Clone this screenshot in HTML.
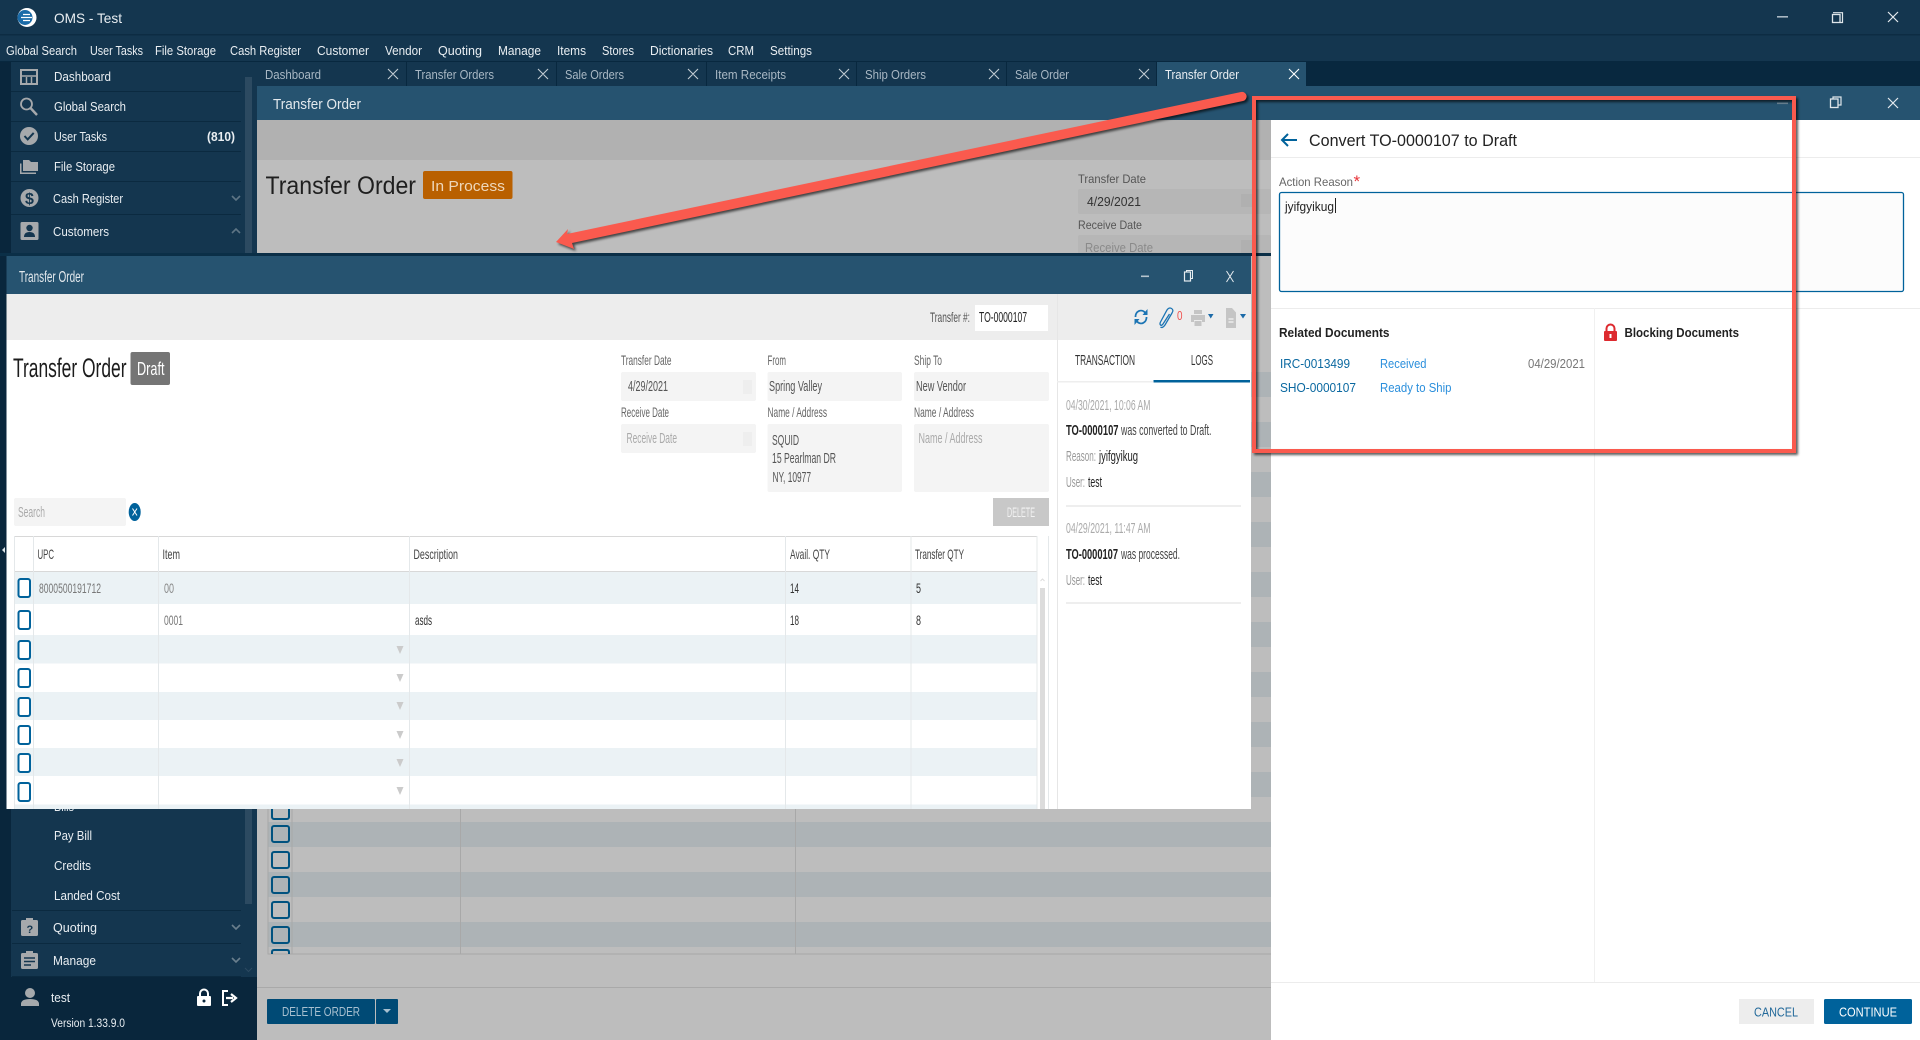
<!DOCTYPE html>
<html lang="en">
<head>
<meta charset="utf-8">
<title>OMS - Test</title>
<style>
html,body{margin:0;padding:0;width:1920px;height:1040px;overflow:hidden;background:#bdbdbd}
svg{display:block}
text{font-family:"Liberation Sans",sans-serif;white-space:pre}
.m{font-size:12.5px;fill:#e9eef2}
.tb{font-size:12.5px;fill:#a9b8c4}
.s{font-size:13px;fill:#e9eef2}
.f{font-size:12px;fill:#666}
.v{font-size:12.5px;fill:#555}
.h{font-size:12px;fill:#444}
.d{font-size:12px;fill:#777}
.l{font-size:12.5px;fill:#aaa}
.b{font-size:12.5px;fill:#222}
.bb{font-size:12.5px;fill:#222;font-weight:bold}
.a{font-size:12.5px}
.mo .d,.mo .h{font-size:14px}
.mo .v,.mo .l,.mo .b,.mo .bb,.mo .a{font-size:14.5px}
</style>
</head>
<body>
<svg xmlns="http://www.w3.org/2000/svg" width="1920" height="1040" viewBox="0 0 1920 1040">
<defs>
<filter id="sh" x="-5%" y="-5%" width="110%" height="110%"><feGaussianBlur stdDeviation="1.2"/></filter>
<filter id="bl" filterUnits="userSpaceOnUse" x="0" y="250" width="1260" height="565"><feGaussianBlur stdDeviation="0.3"/></filter>
</defs>

<!-- app chrome -->
<rect width="1920" height="1040" fill="#bdbdbd"/>
<rect width="1920" height="62" fill="#14364f"/>
<rect y="34" width="1920" height="1.5" fill="#0d2c43"/>
<rect y="61" width="1920" height="25" fill="#08283f"/>

<circle cx="27" cy="17.500" r="9.500" fill="#fff"/>
<circle cx="25" cy="17.500" r="7.500" fill="#1a6ba8"/>
<path d="M23 14.500h7M21 17.500h11M23 20.500h7" stroke="#fff" stroke-width="1.300"/>
<text x="54" y="23" class="m" style="font-size:14px" textLength="68" lengthAdjust="spacingAndGlyphs">OMS - Test</text>

<rect x="1777" y="16" width="11" height="1.6" fill="#aab8c3"/>
<path d="M1833 12.700h9.500v9.800h-2" fill="none" stroke="#dfe6ea" stroke-width="1.2"/><rect x="1832.5" y="14.500" width="7.5" height="8" fill="none" stroke="#dfe6ea" stroke-width="1.3"/>
<path d="M1888 12l10 10M1898 12l-10 10" stroke="#e5eaee" stroke-width="1.2"/>

<!-- menu -->
<text x="6" y="55" class="m" textLength="71" lengthAdjust="spacingAndGlyphs">Global Search</text>
<text x="90" y="55" class="m" textLength="53" lengthAdjust="spacingAndGlyphs">User Tasks</text>
<text x="155" y="55" class="m" textLength="61" lengthAdjust="spacingAndGlyphs">File Storage</text>
<text x="230" y="55" class="m" textLength="71" lengthAdjust="spacingAndGlyphs">Cash Register</text>
<text x="317" y="55" class="m" textLength="52" lengthAdjust="spacingAndGlyphs">Customer</text>
<text x="385" y="55" class="m" textLength="37" lengthAdjust="spacingAndGlyphs">Vendor</text>
<text x="438" y="55" class="m" textLength="44" lengthAdjust="spacingAndGlyphs">Quoting</text>
<text x="498" y="55" class="m" textLength="43" lengthAdjust="spacingAndGlyphs">Manage</text>
<text x="557" y="55" class="m" textLength="29" lengthAdjust="spacingAndGlyphs">Items</text>
<text x="602" y="55" class="m" textLength="32" lengthAdjust="spacingAndGlyphs">Stores</text>
<text x="650" y="55" class="m" textLength="63" lengthAdjust="spacingAndGlyphs">Dictionaries</text>
<text x="728" y="55" class="m" textLength="26" lengthAdjust="spacingAndGlyphs">CRM</text>
<text x="770" y="55" class="m" textLength="42" lengthAdjust="spacingAndGlyphs">Settings</text>

<!-- tabs -->
<rect x="257" y="62" width="149" height="24" fill="#14364f"/>
<rect x="407" y="62" width="149" height="24" fill="#14364f"/>
<rect x="557" y="62" width="149" height="24" fill="#14364f"/>
<rect x="707" y="62" width="149" height="24" fill="#14364f"/>
<rect x="857" y="62" width="149" height="24" fill="#14364f"/>
<rect x="1007" y="62" width="149" height="24" fill="#14364f"/>
<rect x="1157" y="62" width="149" height="24" fill="#265370"/>
<text x="265" y="79" class="tb" textLength="56" lengthAdjust="spacingAndGlyphs">Dashboard</text>
<text x="415" y="79" class="tb" textLength="79" lengthAdjust="spacingAndGlyphs">Transfer Orders</text>
<text x="565" y="79" class="tb" textLength="59" lengthAdjust="spacingAndGlyphs">Sale Orders</text>
<text x="715" y="79" class="tb" textLength="71" lengthAdjust="spacingAndGlyphs">Item Receipts</text>
<text x="865" y="79" class="tb" textLength="61" lengthAdjust="spacingAndGlyphs">Ship Orders</text>
<text x="1015" y="79" class="tb" textLength="54" lengthAdjust="spacingAndGlyphs">Sale Order</text>
<text x="1165" y="79" class="m" textLength="74" lengthAdjust="spacingAndGlyphs">Transfer Order</text>
<g stroke="#c2ccd4" stroke-width="1.1">
<path d="M388 69l10 10M398 69l-10 10M538 69l10 10M548 69l-10 10M688 69l10 10M698 69l-10 10M839 69l10 10M849 69l-10 10M989 69l10 10M999 69l-10 10M1139 69l10 10M1149 69l-10 10"/>
<path d="M1289 69l10 10M1299 69l-10 10" stroke="#fff"/>
</g>

<!-- back page -->
<rect x="257" y="86" width="1663" height="34" fill="#265370"/>
<text x="273" y="109" style="font-size:14.5px;fill:#e3e9ed" textLength="88" lengthAdjust="spacingAndGlyphs">Transfer Order</text>
<rect x="257" y="120" width="1014" height="40" fill="#b1b1b1"/>
<text x="265.500" y="194" style="font-size:25px;fill:#1f1f1f" textLength="150.500" lengthAdjust="spacingAndGlyphs">Transfer Order</text>
<rect x="423" y="171" width="89.5" height="28" rx="2" fill="#b96000"/>
<text x="431" y="191" style="font-size:15px;fill:#eed7bb" textLength="74" lengthAdjust="spacingAndGlyphs">In Process</text>
<text x="1078" y="183" class="f" style="fill:#555" textLength="68" lengthAdjust="spacingAndGlyphs">Transfer Date</text>
<rect x="1078" y="189" width="193" height="25" rx="2" fill="#b6b6b6"/>
<text x="1087" y="206" class="b" style="fill:#333" textLength="54" lengthAdjust="spacingAndGlyphs">4/29/2021</text>
<text x="1078" y="229" class="f" style="fill:#555" textLength="64" lengthAdjust="spacingAndGlyphs">Receive Date</text>
<rect x="1078" y="235" width="193" height="21" rx="2" fill="#b6b6b6"/>
<text x="1085" y="252" class="b" style="fill:#8a8a8a" textLength="68" lengthAdjust="spacingAndGlyphs">Receive Date</text>
<rect x="1241" y="194" width="11" height="13" fill="#b0b0b0"/>
<rect x="1241" y="240" width="11" height="13" fill="#b0b0b0"/>

<!-- back table -->
<g fill="#adb3b6">
<rect x="268" y="372" width="1003" height="25"/><rect x="268" y="422" width="1003" height="25"/><rect x="268" y="472" width="1003" height="25"/><rect x="268" y="522" width="1003" height="25"/><rect x="268" y="572" width="1003" height="25"/><rect x="268" y="622" width="1003" height="25"/><rect x="268" y="672" width="1003" height="25"/><rect x="268" y="722" width="1003" height="25"/><rect x="268" y="772" width="1003" height="25"/><rect x="268" y="822" width="1003" height="25"/><rect x="268" y="872" width="1003" height="25"/><rect x="268" y="922" width="1003" height="25"/>
</g>
<path d="M268 800v154h1003M292 800v154M460.500 800v154M795.500 800v154" fill="none" stroke="#a8a8a8"/>
<g fill="none" stroke="#00527f" stroke-width="2">
<rect x="272" y="803" width="17" height="16" rx="2"/>
<rect x="272" y="826" width="17" height="16" rx="2"/>
<rect x="272" y="852" width="17" height="16" rx="2"/>
<rect x="272" y="877" width="17" height="16" rx="2"/>
<rect x="272" y="902" width="17" height="16" rx="2"/>
<rect x="272" y="927" width="17" height="16" rx="2"/>
</g>
<path d="M272 954v-2q0-2 2-2h13q2 0 2 2v2" fill="none" stroke="#00527f" stroke-width="2"/>
<rect x="257" y="987" width="1014" height="1" fill="#a9a9a9"/>
<rect x="267" y="999" width="108" height="25" rx="1" fill="#004a75"/>
<rect x="376" y="999" width="22" height="25" rx="1" fill="#004a75"/>
<text x="282" y="1016" class="a" style="fill:#a8c0d0" textLength="78" lengthAdjust="spacingAndGlyphs">DELETE ORDER</text>
<path d="M383 1009h8l-4 4z" fill="#a8c0d0"/>

<!-- sidebar -->
<rect y="62" width="257" height="978" fill="#14364f"/>
<rect y="62" width="11" height="978" fill="#0a2a41"/>
<rect x="245" y="77" width="7" height="827" fill="#2c4a61"/>
<g fill="#0b2a40">
<rect x="11" y="91" width="230" height="1"/><rect x="11" y="121" width="230" height="1"/><rect x="11" y="151" width="230" height="1"/><rect x="11" y="181" width="230" height="1"/><rect x="11" y="214" width="230" height="1"/>
<rect x="12" y="910" width="229" height="1"/><rect x="12" y="943" width="229" height="1"/><rect x="12" y="976" width="229" height="1"/>
</g>
<text x="54" y="81" class="s" textLength="57" lengthAdjust="spacingAndGlyphs">Dashboard</text>
<text x="54" y="111" class="s" textLength="72" lengthAdjust="spacingAndGlyphs">Global Search</text>
<text x="54" y="141" class="s" textLength="53" lengthAdjust="spacingAndGlyphs">User Tasks</text>
<text x="207" y="141" class="s" style="font-weight:bold" textLength="28" lengthAdjust="spacingAndGlyphs">(810)</text>
<text x="54" y="171" class="s" textLength="61" lengthAdjust="spacingAndGlyphs">File Storage</text>
<text x="53" y="203" class="s" textLength="70" lengthAdjust="spacingAndGlyphs">Cash Register</text>
<text x="53" y="236" class="s" textLength="56" lengthAdjust="spacingAndGlyphs">Customers</text>
<!-- sidebar icons -->
<g fill="none" stroke="#a6a9ac">
<rect x="21" y="70" width="16" height="14" stroke-width="2"/><path d="M21 76h16M26.500 77v7M31.500 77v7" stroke-width="1.500"/>
<circle cx="26.500" cy="104" r="5.500" stroke-width="1.800"/><path d="M30.500 108l6.500 7" stroke-width="2.400"/>
</g>
<circle cx="29" cy="136" r="9" fill="#a6a9ac"/><path d="M24.500 136l3.200 3.400 6-6.500" fill="none" stroke="#14364f" stroke-width="2"/>
<path d="M20 163.500v10.500h16v-1.500H21.500v-9zM23 160h6l2 2h7v9H23z" fill="#a6a9ac"/>
<circle cx="29.500" cy="198" r="9" fill="#a6a9ac"/><text x="25" y="204" style="font-size:16px;font-weight:bold;fill:#14364f">$</text>
<rect x="20.500" y="222" width="18" height="18" rx="1.500" fill="#a6a9ac"/><circle cx="29.500" cy="228" r="3.200" fill="#14364f"/><path d="M24 237q0-5 5.500-5t5.500 5z" fill="#14364f"/>
<path d="M232 196l4 4 4-4M232 233l4-4 4 4" fill="none" stroke="#5e7585" stroke-width="1.600"/>
<text x="54" y="811" class="s" textLength="20" lengthAdjust="spacingAndGlyphs">Bills</text>
<text x="54" y="840" class="s" textLength="38" lengthAdjust="spacingAndGlyphs">Pay Bill</text>
<text x="54" y="870" class="s" textLength="37" lengthAdjust="spacingAndGlyphs">Credits</text>
<text x="54" y="900" class="s" textLength="66" lengthAdjust="spacingAndGlyphs">Landed Cost</text>
<text x="53" y="932" class="s" textLength="44" lengthAdjust="spacingAndGlyphs">Quoting</text>
<text x="53" y="965" class="s" textLength="43" lengthAdjust="spacingAndGlyphs">Manage</text>
<rect x="21" y="920" width="17" height="16" rx="1.500" fill="#a6a9ac"/><rect x="26" y="918" width="7" height="4" fill="#a6a9ac"/><text x="26.500" y="933" style="font-size:11px;font-weight:bold;fill:#14364f">?</text>
<rect x="21" y="953" width="17" height="16" rx="1.500" fill="#a6a9ac"/><rect x="26" y="951" width="7" height="4" fill="#a6a9ac"/><path d="M24 958h11M24 961.500h11M24 965h7" stroke="#14364f" stroke-width="1.500"/>
<path d="M232 925l4 4 4-4M232 958l4 4 4-4" fill="none" stroke="#6a7f8d" stroke-width="1.600"/>
<path d="M245 968l3.500 3.500 3.500-3.500" fill="none" stroke="#2c4a61"/>
<rect y="977" width="257" height="63" fill="#09263c"/>
<rect width="11" y="62" height="915" fill="#09263c"/>
<circle cx="30" cy="993" r="5" fill="#a6a9ac"/><path d="M21 1006v-2q0-5 9-5t9 5v2z" fill="#a6a9ac"/>
<text x="51" y="1002" class="s" textLength="19" lengthAdjust="spacingAndGlyphs">test</text>
<text x="51" y="1027" style="font-size:11.500px;fill:#e9eef2" textLength="74" lengthAdjust="spacingAndGlyphs">Version 1.33.9.0</text>
<rect x="197" y="996" width="14" height="10" rx="1" fill="#fff"/><path d="M200 996v-2.500a4 4 0 0 1 8 0v2.500" fill="none" stroke="#fff" stroke-width="2"/><circle cx="204" cy="1001" r="1.500" fill="#09263c"/>
<path d="M228 991h-5v14h5" fill="none" stroke="#fff" stroke-width="2"/><path d="M226 998h7M231 994l5 4-5 4" fill="none" stroke="#fff" stroke-width="2.200"/>

<!-- right panel -->
<rect x="1271" y="120" width="649" height="920" fill="#fff"/>
<rect x="1271" y="157" width="649" height="1" fill="#ececec"/>
<path d="M1297 140h-15M1288 134l-6 6 6 6" fill="none" stroke="#00629b" stroke-width="2"/>
<text x="1309" y="146" style="font-size:16.500px;fill:#222" textLength="208" lengthAdjust="spacingAndGlyphs">Convert TO-0000107 to Draft</text>
<text x="1279" y="186" class="f" textLength="74" lengthAdjust="spacingAndGlyphs">Action Reason</text>
<text x="1353.500" y="187" style="font-size:17px;fill:#e8353a">*</text>
<rect x="1279.500" y="192.500" width="624" height="99" rx="2" fill="#fcfcfc" stroke="#00629b" stroke-width="1.300"/>
<text x="1285" y="211" class="b" textLength="49" lengthAdjust="spacingAndGlyphs">jyifgyikug</text>
<rect x="1335" y="198" width="1" height="15" fill="#222"/>
<rect x="1271" y="308" width="649" height="1" fill="#ececec"/>
<rect x="1594" y="308" width="1" height="674" fill="#f0f0f0"/>
<text x="1279" y="337" class="bb" textLength="110.500" lengthAdjust="spacingAndGlyphs">Related Documents</text>
<rect x="1604" y="331" width="13" height="10" rx="1" fill="#dd2a2f"/><path d="M1606.500 331v-2.500a4 4 0 0 1 8 0v2.500" fill="none" stroke="#dd2a2f" stroke-width="2"/><rect x="1609.500" y="334" width="2" height="4" fill="#fff"/>
<text x="1624.500" y="337" class="bb" textLength="114.500" lengthAdjust="spacingAndGlyphs">Blocking Documents</text>
<text x="1280" y="368" class="a" style="fill:#0a68a0" textLength="70" lengthAdjust="spacingAndGlyphs">IRC-0013499</text>
<text x="1380" y="368" class="a" style="fill:#2b8fdc" textLength="46.500" lengthAdjust="spacingAndGlyphs">Received</text>
<text x="1528" y="368" class="a" style="fill:#777" textLength="57" lengthAdjust="spacingAndGlyphs">04/29/2021</text>
<text x="1280" y="392" class="a" style="fill:#0a68a0" textLength="76" lengthAdjust="spacingAndGlyphs">SHO-0000107</text>
<text x="1380" y="392" class="a" style="fill:#2b8fdc" textLength="71.500" lengthAdjust="spacingAndGlyphs">Ready to Ship</text>
<rect x="1271" y="982" width="649" height="1" fill="#ececec"/>
<rect x="1739" y="999" width="75" height="25" fill="#ededed"/>
<text x="1754" y="1016.500" class="a" style="fill:#22699a" textLength="44" lengthAdjust="spacingAndGlyphs">CANCEL</text>
<rect x="1824" y="999" width="88" height="25" rx="1.500" fill="#00629b"/>
<text x="1839" y="1016.500" class="a" style="fill:#fff" textLength="58" lengthAdjust="spacingAndGlyphs">CONTINUE</text>
<rect x="1777" y="102.500" width="11" height="1.600" fill="#6d8798"/>
<rect x="1830.500" y="99" width="7.500" height="8.500" fill="none" stroke="#dfe6ea" stroke-width="1.300"/><path d="M1833 99v-2h8v8h-3" fill="none" stroke="#dfe6ea" stroke-width="1.200"/>
<path d="M1888 98l10 10M1898 98l-10 10" stroke="#e5eaee" stroke-width="1.200"/>

<!-- front modal -->
<rect y="253" width="1271" height="3" fill="#0b2f47"/>
<rect y="256" width="6.500" height="553" fill="#09263c"/>
<path d="M5 547l-3 3 3 3z" fill="#dfe6ea"/>
<g class="mo" filter="url(#bl)">
<rect x="6.500" y="256" width="1244.500" height="553" fill="#fff"/>
<rect x="6.500" y="256" width="1244.500" height="38" fill="#265370"/>
<rect x="6.500" y="294" width="1244.500" height="46" fill="#ededed"/>
<rect x="1057" y="294" width="1" height="515" fill="#e6e6e6"/>
<text x="19" y="282" style="font-size:15.500px;fill:#e3e9ed" textLength="65" lengthAdjust="spacingAndGlyphs">Transfer Order</text>
<rect x="1141" y="275.500" width="8" height="1.600" fill="#b6c4ce"/>
<rect x="1184.500" y="272" width="6" height="9" fill="none" stroke="#e6ecf0" stroke-width="1.200"/><path d="M1186.500 272v-1.500h6v8h-2" fill="none" stroke="#e6ecf0"/>
<path d="M1226.500 271l7 11M1233.500 271l-7 11" stroke="#e6ecf0" stroke-width="1"/>
<text x="930" y="322" class="d" style="fill:#555" textLength="40" lengthAdjust="spacingAndGlyphs">Transfer #:</text>
<rect x="975" y="305" width="73" height="26" fill="#fff"/>
<text x="979" y="322" class="b" textLength="48" lengthAdjust="spacingAndGlyphs">TO-0000107</text>
<!-- toolbar icons -->
<path d="M1135.500 317a5.500 6 0 0 1 9.500-4.500M1146.500 317a5.500 6 0 0 1-9.500 4.500" fill="none" stroke="#1d74b4" stroke-width="1.800"/>
<path d="M1147.500 309v6h-5zM1134.500 325v-6h5z" fill="#1d74b4"/>
<path d="M1169.500 314l-6.500 10q-1.500 2-2.500 1t0-3l6.500-12q2-3 4.500-1.500t.5 4.500l-7 12q-2.500 3.500-4.500 2" fill="none" stroke="#1d74b4" stroke-width="1.300"/>
<text x="1177" y="320" style="font-size:13px;fill:#f0524f" textLength="5.500" lengthAdjust="spacingAndGlyphs">0</text>
<path d="M1191 315h14v7h-3v-2h-8v2h-3zM1194 310h8v4h-8zM1194.500 321h7v5h-7z" fill="#c5c5c5"/>
<path d="M1208 314h5.500l-2.750 4.500zM1240 314h6l-3 4.500z" fill="#1a6ba8"/>
<path d="M1226 308h6l4 4.500v15.500h-10z" fill="#c5c5c5"/><path d="M1228.500 319h5M1228.500 322h5" stroke="#fff"/>

<text x="13" y="377" style="font-size:27px;fill:#1c1c1c" textLength="113.500" lengthAdjust="spacingAndGlyphs">Transfer Order</text>
<rect x="130.500" y="352" width="39.500" height="33" rx="2" fill="#757575"/>
<text x="137" y="375" style="font-size:18px;fill:#fff" textLength="27.500" lengthAdjust="spacingAndGlyphs">Draft</text>

<g fill="#f4f4f4">
<rect x="621" y="372" width="135" height="29" rx="2"/>
<rect x="621" y="424" width="135" height="29" rx="2"/>
<rect x="767.500" y="372" width="134.500" height="29" rx="2"/>
<rect x="767.500" y="424" width="134.500" height="68" rx="2"/>
<rect x="914" y="372" width="135" height="29" rx="2"/>
<rect x="914" y="424" width="135" height="68" rx="2"/>
<rect x="14" y="498" width="112" height="28" rx="2"/>
</g>
<rect x="743" y="380" width="9" height="14" fill="#eeeeee"/>
<rect x="743" y="432" width="9" height="14" fill="#eeeeee"/>
<text x="621" y="365" class="d" style="fill:#666" textLength="50.500" lengthAdjust="spacingAndGlyphs">Transfer Date</text>
<text x="628" y="391" class="v" textLength="40" lengthAdjust="spacingAndGlyphs">4/29/2021</text>
<text x="621" y="417" class="d" style="fill:#666" textLength="48" lengthAdjust="spacingAndGlyphs">Receive Date</text>
<text x="626.500" y="443" class="l" textLength="50.500" lengthAdjust="spacingAndGlyphs">Receive Date</text>
<text x="767.500" y="365" class="d" style="fill:#666" textLength="18.500" lengthAdjust="spacingAndGlyphs">From</text>
<text x="769" y="391" class="v" textLength="53" lengthAdjust="spacingAndGlyphs">Spring Valley</text>
<text x="914" y="365" class="d" style="fill:#666" textLength="28" lengthAdjust="spacingAndGlyphs">Ship To</text>
<text x="916" y="391" class="v" textLength="50" lengthAdjust="spacingAndGlyphs">New Vendor</text>
<text x="767.500" y="417" class="d" style="fill:#666" textLength="59.500" lengthAdjust="spacingAndGlyphs">Name / Address</text>
<text x="914" y="417" class="d" style="fill:#666" textLength="60" lengthAdjust="spacingAndGlyphs">Name / Address</text>
<text x="772" y="445" class="v" textLength="27" lengthAdjust="spacingAndGlyphs">SQUID</text>
<text x="772" y="463" class="v" textLength="64" lengthAdjust="spacingAndGlyphs">15 Pearlman DR</text>
<text x="772.500" y="482" class="v" textLength="38.500" lengthAdjust="spacingAndGlyphs">NY, 10977</text>
<text x="918.500" y="443" class="l" textLength="64" lengthAdjust="spacingAndGlyphs">Name / Address</text>
<rect x="993" y="498" width="56" height="28" fill="#c8c8c8"/>
<text x="1007" y="517" class="d" style="fill:#f2f2f2" textLength="28" lengthAdjust="spacingAndGlyphs">DELETE</text>
<text x="18" y="517" class="l" textLength="27" lengthAdjust="spacingAndGlyphs">Search</text>
<ellipse cx="134.700" cy="512" rx="6" ry="9" fill="#00629b"/>
<path d="M132.500 508.500l4.500 7M137 508.500l-4.500 7" stroke="#fff" stroke-width="1"/>

<!-- front table -->
<g fill="#ebf2f5">
<rect x="14" y="571" width="1023" height="33"/>
<rect x="14" y="635" width="1023" height="28.500"/>
<rect x="14" y="692" width="1023" height="28"/>
<rect x="14" y="748" width="1023" height="28"/>
<rect x="14" y="804.500" width="1023" height="4.500"/>
</g>
<rect x="14" y="536" width="1023" height="1" fill="#d8d8d8"/>
<rect x="14" y="571" width="1023" height="1" fill="#d8d8d8"/>
<path d="M14.500 536v273M33.500 536v273M158.500 536v273M409.500 536v273M785.500 536v273M911 536v273M1037 536v273" fill="none" stroke="#e4e8ea"/>
<rect x="1040" y="588" width="5" height="221" fill="#dcdcdc"/>
<path d="M1040.500 581l2-2 2 2" fill="none" stroke="#ddd"/>
<rect x="1048" y="536" width="1" height="273" fill="#e4e8ea"/>
<text x="37.500" y="559" class="h" textLength="16.500" lengthAdjust="spacingAndGlyphs">UPC</text>
<text x="162.500" y="559" class="h" textLength="17.500" lengthAdjust="spacingAndGlyphs">Item</text>
<text x="413.500" y="559" class="h" textLength="44.500" lengthAdjust="spacingAndGlyphs">Description</text>
<text x="790" y="559" class="h" textLength="40" lengthAdjust="spacingAndGlyphs">Avail. QTY</text>
<text x="915" y="559" class="h" textLength="49" lengthAdjust="spacingAndGlyphs">Transfer QTY</text>
<g fill="#fff" stroke="#00629b" stroke-width="2">
<rect x="18.500" y="579" width="11.500" height="18" rx="2"/>
<rect x="18.500" y="611" width="11.500" height="18" rx="2"/>
<rect x="18.500" y="641" width="11.500" height="18" rx="2"/>
<rect x="18.500" y="669" width="11.500" height="18" rx="2"/>
<rect x="18.500" y="698" width="11.500" height="18" rx="2"/>
<rect x="18.500" y="726" width="11.500" height="18" rx="2"/>
<rect x="18.500" y="754" width="11.500" height="18" rx="2"/>
<rect x="18.500" y="783" width="11.500" height="18" rx="2"/>
</g>
<text x="39" y="593" class="d" textLength="62" lengthAdjust="spacingAndGlyphs">8000500191712</text>
<text x="164" y="593" class="d" style="fill:#888" textLength="10" lengthAdjust="spacingAndGlyphs">00</text>
<text x="790" y="593" class="d" style="fill:#333" textLength="9" lengthAdjust="spacingAndGlyphs">14</text>
<text x="916" y="593" class="d" style="fill:#333" textLength="5" lengthAdjust="spacingAndGlyphs">5</text>
<text x="164" y="625" class="d" textLength="19" lengthAdjust="spacingAndGlyphs">0001</text>
<text x="415" y="625" class="d" style="fill:#333" textLength="17" lengthAdjust="spacingAndGlyphs">asds</text>
<text x="790" y="625" class="d" style="fill:#333" textLength="9" lengthAdjust="spacingAndGlyphs">18</text>
<text x="916" y="625" class="d" style="fill:#333" textLength="5" lengthAdjust="spacingAndGlyphs">8</text>
<g fill="#cbcbcb">
<path d="M396.500 646h7l-3.500 8zM396.500 674h7l-3.500 8zM396.500 702h7l-3.500 8zM396.500 731h7l-3.500 8zM396.500 759h7l-3.500 8zM396.500 787h7l-3.500 8z"/>
</g>

<!-- logs -->
<text x="1075" y="365" class="a" style="fill:#333" textLength="60" lengthAdjust="spacingAndGlyphs">TRANSACTION</text>
<text x="1191" y="365" class="a" style="fill:#333" textLength="22" lengthAdjust="spacingAndGlyphs">LOGS</text>
<rect x="1057" y="381" width="96" height="1.500" fill="#eeeeee"/>
<rect x="1153.500" y="380" width="96.500" height="2.500" fill="#00629b"/>
<text x="1066" y="410" class="l" textLength="84.500" lengthAdjust="spacingAndGlyphs">04/30/2021, 10:06 AM</text>
<text x="1066" y="435" class="bb" textLength="52.500" lengthAdjust="spacingAndGlyphs">TO-0000107</text>
<text x="1121" y="435" class="b" style="fill:#444" textLength="90.500" lengthAdjust="spacingAndGlyphs">was converted to Draft.</text>
<text x="1066" y="461" class="l" style="fill:#999" textLength="30" lengthAdjust="spacingAndGlyphs">Reason:</text>
<text x="1099" y="461" class="b" textLength="39" lengthAdjust="spacingAndGlyphs">jyifgyikug</text>
<text x="1066" y="487" class="l" style="fill:#999" textLength="19" lengthAdjust="spacingAndGlyphs">User:</text>
<text x="1088" y="487" class="b" textLength="14" lengthAdjust="spacingAndGlyphs">test</text>
<rect x="1066" y="505" width="175" height="2" fill="#eeeeee"/>
<text x="1066" y="533" class="l" textLength="84.500" lengthAdjust="spacingAndGlyphs">04/29/2021, 11:47 AM</text>
<text x="1066" y="559" class="bb" textLength="52" lengthAdjust="spacingAndGlyphs">TO-0000107</text>
<text x="1121" y="559" class="b" style="fill:#444" textLength="59" lengthAdjust="spacingAndGlyphs">was processed.</text>
<text x="1066" y="585" class="l" style="fill:#999" textLength="19" lengthAdjust="spacingAndGlyphs">User:</text>
<text x="1088" y="585" class="b" textLength="14" lengthAdjust="spacingAndGlyphs">test</text>
<rect x="1066" y="602" width="175" height="2" fill="#eeeeee"/>
</g>

<!-- annotations -->
<g filter="url(#sh)" opacity=".65" transform="translate(2 2)">
<rect x="1254" y="98" width="540" height="353" fill="none" stroke="#000" stroke-width="4"/>
<path d="M556 242L568 229L567 234L1241 92A4.500 4.500 0 0 1 1243 101L572 243L574 249Z" fill="#000"/>
</g>
<rect x="1254" y="98" width="540" height="353" fill="none" stroke="#fa5a4e" stroke-width="4"/>
<path d="M556 242L568 229L567 234L1241 92A4.500 4.500 0 0 1 1243 101L572 243L574 249Z" fill="#fa5a4e"/>
</svg>
</body>
</html>
